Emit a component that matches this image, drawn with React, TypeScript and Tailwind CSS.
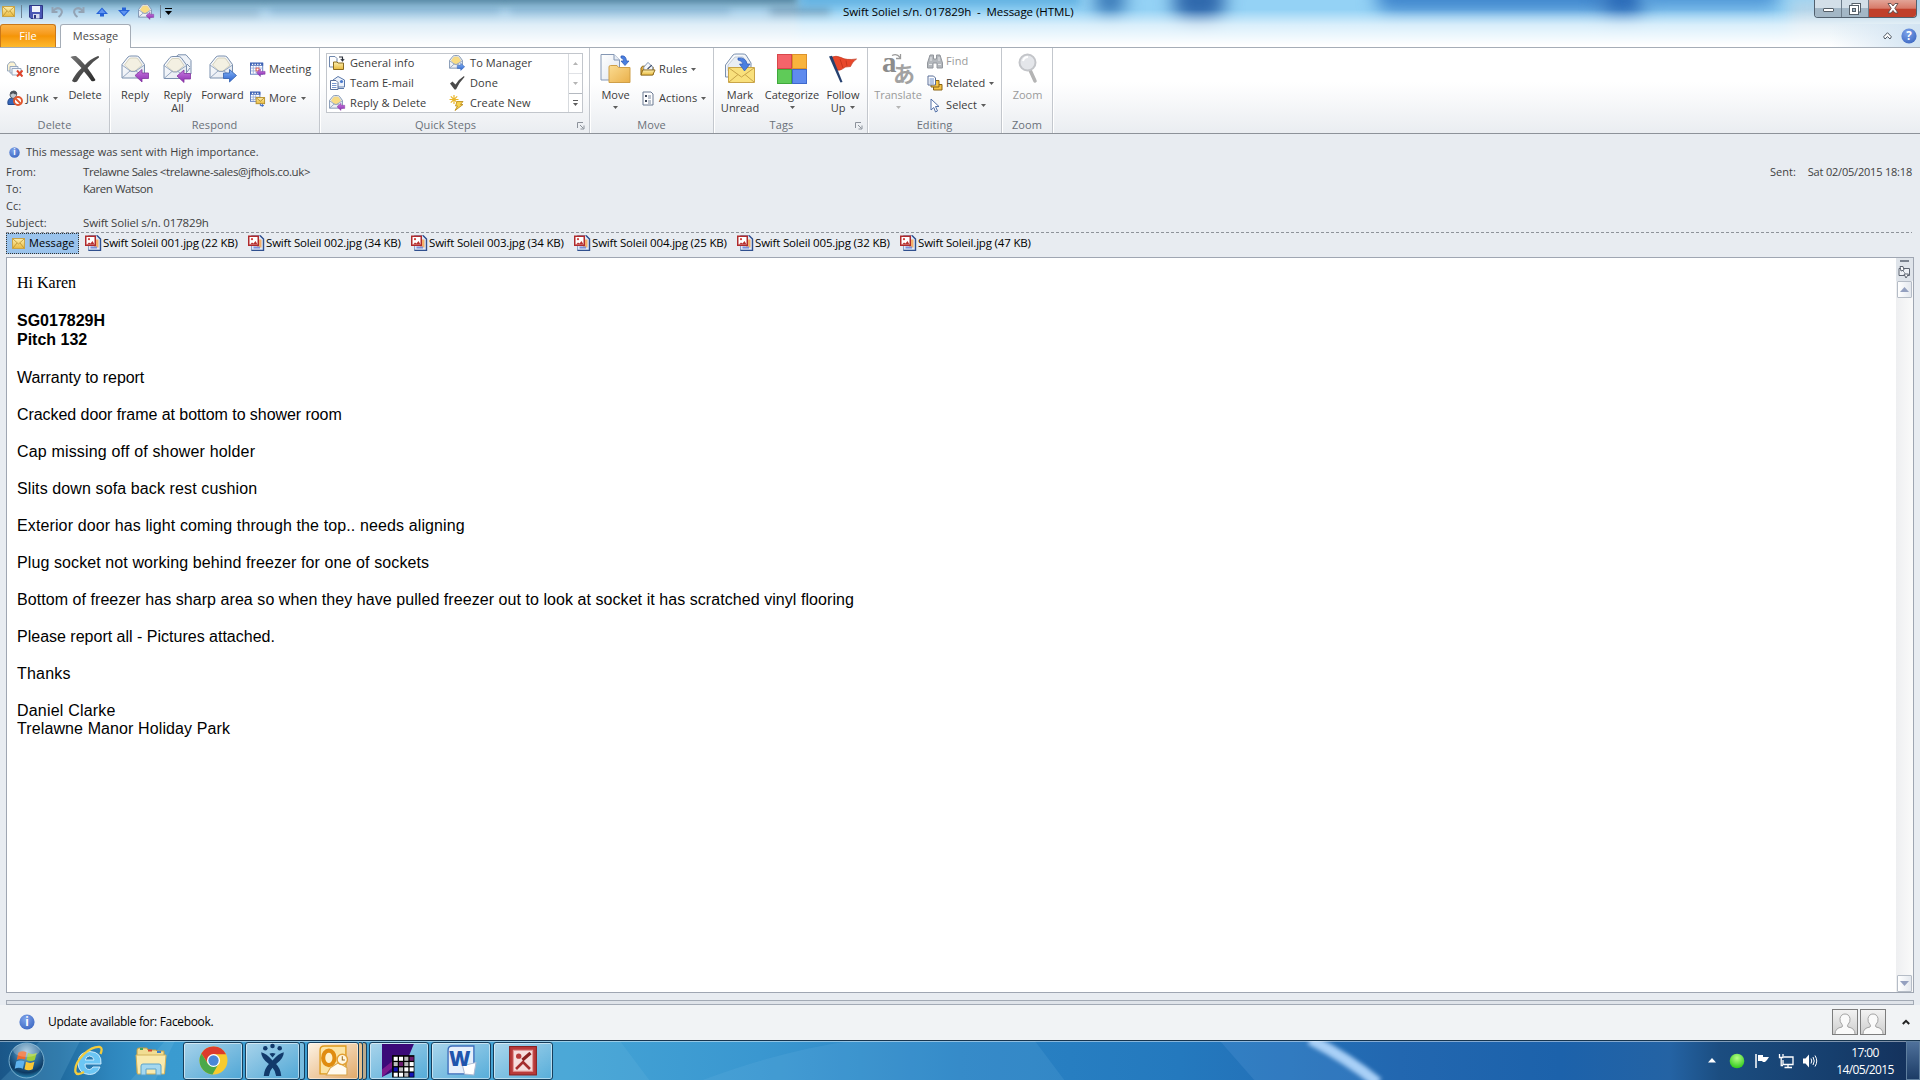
import React from 'react';

type IconProps = { className?: string };

/* ---------- shared icon gradients ---------- */

const Defs: React.FC = () => (
  <svg width="0" height="0" className="absolute" aria-hidden="true">
    <defs>
      <linearGradient id="gold" x1="0" y1="0" x2="0" y2="1">
        <stop offset="0" stopColor="#fdf0b0" />
        <stop offset="1" stopColor="#e9b93c" />
      </linearGradient>
      <linearGradient id="folder" x1="0" y1="0" x2="1" y2="1">
        <stop offset="0" stopColor="#fbdc92" />
        <stop offset="1" stopColor="#eab04a" />
      </linearGradient>
      <linearGradient id="paper" x1="0" y1="0" x2="1" y2="1">
        <stop offset="0" stopColor="#ffffff" />
        <stop offset="1" stopColor="#dfe5ee" />
      </linearGradient>
      <linearGradient id="purple" x1="0" y1="0" x2="0" y2="1">
        <stop offset="0" stopColor="#c77be0" />
        <stop offset="1" stopColor="#8d2bb0" />
      </linearGradient>
      <linearGradient id="blue" x1="0" y1="0" x2="0" y2="1">
        <stop offset="0" stopColor="#86b4f5" />
        <stop offset="1" stopColor="#2a62cf" />
      </linearGradient>
      <linearGradient id="dark" x1="0" y1="0" x2="1" y2="1">
        <stop offset="0" stopColor="#777" />
        <stop offset="1" stopColor="#222" />
      </linearGradient>
      <radialGradient id="orb" cx="0.5" cy="0.25" r="0.8">
        <stop offset="0" stopColor="#9cc4dc" />
        <stop offset="0.45" stopColor="#2c6c9c" />
        <stop offset="0.75" stopColor="#0d3a63" />
        <stop offset="1" stopColor="#2f9fd0" />
      </radialGradient>
      <radialGradient id="info" cx="0.4" cy="0.3" r="0.8">
        <stop offset="0" stopColor="#7ea3ea" />
        <stop offset="1" stopColor="#3a65c0" />
      </radialGradient>
      <radialGradient id="green" cx="0.5" cy="0.3" r="0.7">
        <stop offset="0" stopColor="#b6ff86" />
        <stop offset="1" stopColor="#2fc81c" />
      </radialGradient>
    </defs>
  </svg>
);

/* ---------- icons ---------- */

const YellowMail: React.FC = () => (
  <svg width="13" height="11" viewBox="0 0 13 11" className="block shrink-0">
    <rect x="0.5" y="0.5" width="12" height="10" fill="url(#gold)" stroke="#c9a448" />
    <path d="M1 1 L6.5 6 L12 1 M1 10 L5 5 M12 10 L8 5" fill="none" stroke="#b98f2c" strokeWidth="0.8" />
  </svg>
);

const SaveIcon: React.FC = () => (
  <svg width="14" height="14" viewBox="0 0 14 14" className="block">
    <path d="M0.5 0.5 H13.5 V13.5 H2 L0.5 12 Z" fill="#4a55b4" stroke="#2e3683" />
    <rect x="3" y="1" width="8" height="6" fill="#eef1fb" />
    <rect x="4" y="9" width="6.5" height="4.5" fill="#d5d9ef" />
    <rect x="5" y="10" width="2" height="3.5" fill="#2e3683" />
  </svg>
);

const UndoIcon: React.FC<IconProps> = ({ className }) => (
  <svg width="13" height="12" viewBox="0 0 13 12" className={className}>
    <path d="M1.5 1 V6 H6.5 M2 5.5 C4 2.5 7 1.5 9.5 3 C12 5 11 8.5 7.5 11" fill="none" stroke="#93a3b4" strokeWidth="2" />
  </svg>
);

const DiamondArrow: React.FC<IconProps> = ({ className }) => (
  <svg width="12" height="10" viewBox="0 0 12 10" className={className}>
    <path d="M6 0.500 L12 7 H8 V9.500 H4 V7 H0 Z" fill="#2763d8" />
    <path d="M6 2 L9.500 6 H2.500 Z" fill="#5f94f0" />
  </svg>
);

const OpenMail: React.FC<{ size?: number; arrow: 'purple' | 'blue'; warm?: boolean }> = ({ size = 28, arrow, warm }) => (
  <svg width={size} height={size} viewBox="0 0 28 28" className="block overflow-visible">
    <path d="M1 9.5 L7 2 Q8 1 10 1 H15 Q17 1 18 2 L23.500 9.5 V23 H1 Z" fill="url(#paper)" stroke="#7b90ae" strokeWidth={size < 20 ? 1.6 : 1} />
    <path d="M3.500 10 L8 4 Q9 3 10 3 H15 Q16 3 17 4 L21 10 L14 16 H10 Z" fill={warm ? '#f9dc83' : '#f3f0e2'} stroke="#c9c4ac" strokeWidth="0.7" />
    <path d="M1 10 L10 16.500 H14 L23.500 10 M1 23 L9.500 15.500 M23.500 23 L14.500 15.500" fill="none" stroke="#8c9fba" strokeWidth={size < 20 ? 1.5 : 0.9} />
    {arrow === 'purple' ? (
      <path d="M14 20.500 L21 14.500 V18 H27.500 V23.500 H21 V27 Z" fill="url(#purple)" stroke="#8336a0" strokeWidth="0.8" />
    ) : (
      <path d="M27.500 20.500 L20.500 14.500 V18 H14.500 V23.500 H20.500 V27 Z" fill="url(#blue)" stroke="#315fae" strokeWidth="0.8" />
    )}
  </svg>
);

const ReplyAllIcon: React.FC = () => (
  <svg width="30" height="30" viewBox="0 0 30 30" className="block overflow-visible">
    <path d="M12 4 L15 0.800 H23 L28 6.500 V20 H12 Z" fill="#eef2f8" stroke="#7b90ae" />
    <path d="M24 10 l3 3 m-3 5 l3 -4" stroke="#7b90ae" />
    <g transform="translate(0 1.500)">
      <path d="M1 9.500 L7 2 Q8 1 10 1 H15 Q17 1 18 2 L23.500 9.500 V23 H1 Z" fill="url(#paper)" stroke="#7b90ae" />
      <path d="M3.500 10 L8 4 Q9 3 10 3 H15 Q16 3 17 4 L21 10 L14 16 H10 Z" fill="#f3f0e2" stroke="#c9c4ac" strokeWidth="0.7" />
      <path d="M1 10 L10 16.500 H14 L23.500 10 M1 23 L9.500 15.500 M23.500 23 L14.500 15.500" fill="none" stroke="#8c9fba" strokeWidth="0.9" />
      <path d="M14 20.500 L21 14.500 V18 H27.500 V23.500 H21 V27 Z" fill="url(#purple)" stroke="#8336a0" strokeWidth="0.8" />
    </g>
  </svg>
);

const IgnoreIcon: React.FC = () => (
  <svg width="16" height="16" viewBox="0 0 16 16" className="block">
    <path d="M0.500 4 L3 1 H7 L9 4 V10 H0.500 Z" fill="#fbf3d3" stroke="#8da0ba" strokeWidth="0.9" />
    <path d="M3 5.500 H11 V12 H3 Z" fill="#eef3f9" stroke="#8da0ba" strokeWidth="0.9" />
    <path d="M5 7.500 H14 V14 H5 Z" fill="#f6f9fc" stroke="#8da0ba" strokeWidth="0.9" />
    <path d="M10 9.500 L15.500 15.500 M15.500 9.500 L10 15.500" stroke="#e0452c" strokeWidth="2" />
  </svg>
);

const JunkIcon: React.FC = () => (
  <svg width="16" height="16" viewBox="0 0 16 16" className="block">
    <path d="M1 14.500 Q0 8 5 8 Q10 8 9 14.500 Z" fill="#3767b8" stroke="#264a8c" />
    <path d="M3 5 Q3 1 6.500 1 Q10.500 1 9.500 5.500 Q8.500 8.500 6 8.500 Q3.500 8 3 5 Z" fill="#c3c9cf" stroke="#575d66" />
    <path d="M3 4 Q4 0.800 7 1 Q10 1 9.800 4 Q7 5 6 3 Q5 5 3 4 Z" fill="#4b5159" />
    <circle cx="11" cy="11" r="4" fill="#fff" stroke="#e0572e" strokeWidth="1.900" />
    <path d="M8.500 8.500 L13.500 13.500" stroke="#e0572e" strokeWidth="1.800" />
  </svg>
);

const DeleteIcon: React.FC = () => (
  <svg width="30" height="28" viewBox="0 0 30 28" className="block">
    <path
      d="M0.500 2 Q3 0.500 6 1 Q11 5 15 10 Q20 4 28 1 Q29.500 1 29 2.500 Q22 7 17.500 13 Q22 19 25.500 25 Q24 27 21.500 26 Q18 21 14 16.500 Q10 21 7 26.500 Q4 28 2 26 Q5 19 11.500 13 Q6 7 0.500 2 Z"
      fill="url(#dark)"
    />
  </svg>
);

const MeetingIcon: React.FC<{ more?: boolean }> = ({ more }) => (
  <svg width="17" height="17" viewBox="0 0 17 17" className="block">
    <rect x="0.500" y="1.500" width={more ? 10 : 13} height={more ? 10 : 12} fill="#fff" stroke="#5d7cc0" />
    <path d={more ? 'M0 3 H11' : 'M0 3 H14'} stroke="#3d62b4" strokeWidth="3" />
    <path d={more ? 'M2 3 H10' : 'M2 3 H13'} stroke="#fff" strokeWidth="1.200" strokeDasharray="1.400 1.400" />
    <path d={more ? 'M1 7 H10 M1 9.500 H8 M3.500 5 V11 M6 5 V9' : 'M1 7 H13 M1 10 H9 M3.500 5 V13 M6.500 5 V13 M9.500 5 V9'} stroke="#9fb1db" strokeWidth="1" />
    {more ? (
      <>
        <rect x="6.500" y="7.500" width="9" height="6.500" fill="url(#gold)" stroke="#b58f2c" />
        <path d="M7 8 L11 11.500 L15 8" fill="none" stroke="#b58f2c" />
        <path d="M11 14 V16 H14 M12.500 14.500 L14.500 16 L12.500 17" fill="none" stroke="#3664c4" />
      </>
    ) : (
      <>
        <rect x="6.500" y="7" width="3" height="3" fill="#fff" stroke="#e05c4e" />
        <path d="M7 12 L11 8 V10.500 H16 V13.500 H11 V16 Z" fill="url(#purple)" stroke="#8336a0" strokeWidth="0.6" />
      </>
    )}
  </svg>
);

const GeneralInfoIcon: React.FC = () => (
  <svg width="16" height="16" viewBox="0 0 16 16" className="block">
    <path d="M0.500 1.500 H6 L8 3.500 V12 H0.500 Z" fill="#fdfdfe" stroke="#6f87ad" />
    <path d="M10 2 H13.500 V5 M11.800 4 L13.500 6 L15.200 4" fill="none" stroke="#2a2f3a" strokeWidth="1.100" />
    <path d="M4.500 7 H8 L9 8 H14.500 V14.500 H4.500 Z" fill="url(#gold)" stroke="#8a6a1e" />
  </svg>
);

const TeamMailIcon: React.FC = () => (
  <svg width="16" height="16" viewBox="0 0 16 16" className="block">
    <path d="M4 5 L9 1.500 L15.500 5 V12 H4 Z" fill="#eef3fb" stroke="#5a78aa" />
    <circle cx="12.500" cy="6.500" r="1.600" fill="#4a79cc" />
    <path d="M1.500 5.500 H7 L9 7.500 V14.500 H1.500 Z" fill="#fff" stroke="#5a6f98" />
    <path d="M3 8.500 H7.500 M3 10.500 H7.500 M3 12.500 H7.500" stroke="#6b8cc8" strokeWidth="0.900" />
    <path d="M9 13.500 H15" stroke="#5a78aa" />
  </svg>
);

const DoneIcon: React.FC = () => (
  <svg width="16" height="16" viewBox="0 0 16 16" className="block">
    <path d="M1 8.500 L3.500 6.500 L6.500 9.500 Q10 4 15 1 L15.500 2 Q10.500 7 7 14.500 H5.500 Z" fill="#4a4a4a" />
  </svg>
);

const CreateNewIcon: React.FC = () => (
  <svg width="16" height="16" viewBox="0 0 16 16" className="block">
    <path d="M5 0 V9 M0.500 4.500 H9.500 M1.800 1.300 L8.200 7.700 M8.200 1.300 L1.800 7.700" stroke="#eab62a" strokeWidth="1.200" />
    <path d="M8 6.500 H14 L11.500 9.500 H14 L6 15.500 L8.500 11 H6.500 Z" fill="#f8d24e" stroke="#b88816" strokeWidth="0.800" />
  </svg>
);

const MoveIcon: React.FC = () => (
  <svg width="32" height="32" viewBox="0 0 32 32" className="block">
    <path d="M1 1.500 H14 L19.500 7 V27 H1 Z" fill="url(#paper)" stroke="#8497b4" />
    <path d="M14 1.500 V7 H19.500" fill="#e7edf5" stroke="#8497b4" />
    <path d="M21 3 Q26 2 26.500 8 H29 L25 12.500 L21 8 H23.500 Q23.500 5 21 5 Z" fill="#4a7fe0" stroke="#2b58b4" strokeWidth="0.700" />
    <path d="M9 14 Q9 12.500 10.500 12.500 H17 L18.500 14.500 H30 V29.500 H9 Z" fill="url(#folder)" stroke="#cf9f48" />
  </svg>
);

const RulesIcon: React.FC = () => (
  <svg width="17" height="16" viewBox="0 0 17 16" className="block">
    <path d="M1 7 L2.500 5 H6 L7 6 H14 V14 H1 Z" fill="#e6ae3c" stroke="#8a6516" />
    <path d="M4 6 L8.500 1 L13.500 6 V10 H4 Z" fill="#f4f7fc" stroke="#7b90ae" />
    <path d="M8 8 L12.500 4" stroke="#33415f" strokeWidth="1.100" />
    <path d="M3 9 H16 L13.500 14.500 H1 Z" fill="url(#gold)" stroke="#8a6516" />
  </svg>
);

const ActionsIcon: React.FC = () => (
  <svg width="13" height="15" viewBox="0 0 13 15" className="block">
    <path d="M1 1 H9 L11 3 V14 H1 Z" fill="#fdfdfe" stroke="#6b7a93" />
    <rect x="3" y="4" width="2" height="2" fill="#3c4658" />
    <rect x="3" y="9" width="2" height="2" fill="#3c4658" />
    <path d="M6 5 H9 M6 7 H9 M6 10 H9 M6 12 H9" stroke="#6b7a93" strokeWidth="0.900" />
  </svg>
);

const MarkUnreadIcon: React.FC = () => (
  <svg width="32" height="32" viewBox="0 0 32 32" className="block">
    <path d="M1.500 12 L9 2 Q10 1 12 1 H19 Q21 1 22 2 L27 10 V24 H1.500 Z" fill="url(#paper)" stroke="#7b90ae" />
    <path d="M4 12 L11 4 H19 L24 12 V18 H4 Z" fill="#e9eef4" stroke="#aebacb" strokeWidth="0.700" />
    <path d="M4.500 14.500 H30.500 V29.500 H4.500 Z" fill="#f9e07c" stroke="#c9a448" />
    <path d="M5 15 L17.500 24 L30 15 M5 29 L14 21.500 M30 29 L21 21.500" fill="none" stroke="#c9a448" />
    <path d="M14 5 Q22 4 23 11 H26 L20.500 18 L15.500 11 H19 Q18 7.500 14 7 Z" fill="#4a7fe0" stroke="#2b58b4" strokeWidth="0.700" />
  </svg>
);

const CategorizeIcon: React.FC = () => (
  <svg width="30" height="30" viewBox="0 0 30 30" className="block">
    <rect x="0.500" y="0.500" width="14" height="14" fill="#f4646a" stroke="#d8474a" />
    <rect x="15.500" y="0.500" width="14" height="14" fill="#f9b43d" stroke="#dd922a" />
    <rect x="0.500" y="15.500" width="14" height="14" fill="#5fcb58" stroke="#3fa83c" />
    <rect x="15.500" y="15.500" width="14" height="14" fill="#5f8bee" stroke="#3e69cc" />
  </svg>
);

const FlagIcon: React.FC = () => (
  <svg width="30" height="30" viewBox="0 0 30 30" className="block">
    <path d="M3 3.500 Q8 1 13 3.500 Q18 6.500 28.500 5 Q24 8 22.500 12.500 Q17 12 13.500 15.500 Q11 17 8 15.500 Z" fill="#e8472a" stroke="#c03218" strokeWidth="0.700" />
    <path d="M12 5 L15 14 M18 6.500 L19 12" stroke="#c03218" strokeWidth="0.800" />
    <path d="M1 2.500 L4 1.800 L14.500 28 L12.500 28.500 Z" fill="#25406f" />
  </svg>
);

const TranslateIcon: React.FC = () => (
  <svg width="32" height="32" viewBox="0 0 32 32" className="block overflow-visible">
    <text x="0" y="19" fontFamily="Liberation Serif, serif" fontWeight="bold" fontSize="29" fill="#8c8c8c">a</text>
    <text x="11" y="29" fontFamily="Noto Sans CJK JP, sans-serif" fontWeight="bold" fontSize="22" fill="#a2a2a2">あ</text>
    <path d="M10 2.500 Q15 0 18 4.500 M18.500 1 V5.500 H14" fill="none" stroke="#9a9a9a" strokeWidth="1.300" />
  </svg>
);

const FindIcon: React.FC = () => (
  <svg width="16" height="15" viewBox="0 0 16 15" className="block">
    <path d="M3 1 H6.500 V5 H9.500 V1 H13 L15.500 9 V14 H10 V9 H6 V14 H0.500 V9 Z" fill="#b4b8bd" stroke="#92969c" />
    <path d="M2 10.500 H5 M11 10.500 H14 M4 3 V7 M12 3 V7" stroke="#e6e8ea" />
  </svg>
);

const RelatedIcon: React.FC = () => (
  <svg width="16" height="16" viewBox="0 0 16 16" className="block">
    <path d="M6.500 8.500 H10 L11 9.500 H15 V15 H6.500 Z" fill="#f5c343" stroke="#8a6516" />
    <path d="M4 5.500 H12 V12 H4 Z" fill="#f5c343" stroke="#8a6516" />
    <path d="M1 1 H6.500 L8.500 3 V10 H1 Z" fill="#fff" stroke="#5a6f98" />
    <path d="M2.500 4 H7 M2.500 6 H7 M2.500 8 H7" stroke="#6b8cc8" />
  </svg>
);

const SelectIcon: React.FC = () => (
  <svg width="10" height="15" viewBox="0 0 10 15" className="block">
    <path d="M1 1 L9 8.500 H5.500 L7.500 13 L5.500 14 L3.800 9.500 L1 12 Z" fill="#fff" stroke="#5270a8" />
  </svg>
);

const ZoomIcon: React.FC = () => (
  <svg width="20" height="31" viewBox="0 0 20 31" className="block">
    <path d="M12 17 L17 28" stroke="#b4b4b4" strokeWidth="3.500" strokeLinecap="round" />
    <circle cx="9.500" cy="9.500" r="8" fill="#e4e6ea" stroke="#c3c5c9" strokeWidth="2" />
    <path d="M5 8 Q6 4 10 4" fill="none" stroke="#fff" strokeWidth="2" />
  </svg>
);

const JpgIcon: React.FC = () => (
  <svg width="17" height="16" viewBox="0 0 17 16" className="block shrink-0">
    <path d="M3.500 0.500 H12 L15.500 4 V15.500 H3.500 Z" fill="#dfe9f8" stroke="#8da2c8" />
    <path d="M12 0.500 L15.500 4 V15.500 H3.500" fill="none" stroke="#2f4f8e" strokeWidth="1.400" />
    <rect x="9" y="4.500" width="4.500" height="8" fill="#f3b06a" />
    <path d="M5.500 12.500 H12" stroke="#7d90d8" strokeWidth="2" />
    <rect x="0.750" y="1.250" width="9.500" height="9" fill="#fff" stroke="#b02a2c" strokeWidth="1.500" />
    <circle cx="4" cy="4.200" r="1.100" fill="#d0403c" />
    <path d="M2 9.500 L4 7.500 L5.500 8.500 L7.500 6 L9.500 9.500 Z" fill="#b8302e" />
  </svg>
);

const InfoIcon: React.FC<{ size: number; glyph?: string }> = ({ size, glyph = 'i' }) => (
  <svg width={size} height={size} viewBox="0 0 16 16" className="block overflow-visible">
    <circle cx="8" cy="8" r="7.600" fill="url(#info)" />
    <text x="8" y="12" textAnchor="middle" fontFamily="Open Sans, sans-serif" fontWeight="bold" fontSize="11.500" fill="#fff">{glyph}</text>
  </svg>
);

const Caret: React.FC<{ faded?: boolean }> = ({ faded }) => (
  <svg width="5" height="3" viewBox="0 0 5 3" className="block shrink-0">
    <path d="M0 0 H5 L2.500 3 Z" fill={faded ? '#b5b5b5' : '#5c5c5c'} />
  </svg>
);

const Launcher: React.FC = () => (
  <svg width="8" height="8" viewBox="0 0 8 8" className="block">
    <path d="M0.500 6 V0.500 H6" fill="none" stroke="#8c929b" />
    <path d="M3 3 L6.500 6.500 M7 3.500 V7 H3.500" fill="none" stroke="#8c929b" />
  </svg>
);

/* ---------- ribbon pieces ---------- */

interface GroupProps {
  label: string;
  width: string;
  launcher?: boolean;
  children: React.ReactNode;
}

const Group: React.FC<GroupProps> = ({ label, width, launcher, children }) => (
  <div className={`relative flex h-full flex-col border-r border-[#c3c7cd] shadow-[1px_0_0_#fff] ${width}`}>
    <div className="flex h-[69px]">{children}</div>
    <div className={`text-center leading-[16px] text-[#6a7079] tracking-[0.1px] ${launcher ? 'pr-[18px]' : ''}`}>{label}</div>
    {launcher && <div className="absolute right-[4px] bottom-[3px]"><Launcher /></div>}
  </div>
);

interface BigButtonProps {
  icon: React.ReactNode;
  width: string;
  lines: string[];
  caret?: 'below' | 'inline';
  faded?: boolean;
}

const BigButton: React.FC<BigButtonProps> = ({ icon, width, lines, caret, faded }) => (
  <div className={`flex shrink-0 flex-col items-center ${width} ${faded ? 'text-[#9a9a9a]' : ''}`}>
    <div className="flex h-[40px] items-center justify-center pt-px">{icon}</div>
    {lines.map((line, i) => (
      <div key={line} className="flex items-center gap-[5px] leading-[13px] whitespace-nowrap">
        {line}
        {caret === 'inline' && i === lines.length - 1 && <Caret />}
      </div>
    ))}
    {caret === 'below' && <div className="pt-[5px]"><Caret faded={faded} /></div>}
  </div>
);

interface SmallButtonProps {
  icon: React.ReactNode;
  label: string;
  caret?: boolean;
  faded?: boolean;
}

const SmallButton: React.FC<SmallButtonProps> = ({ icon, label, caret, faded }) => (
  <div className={`flex h-[20px] items-center whitespace-nowrap ${faded ? 'text-[#9a9a9a]' : ''}`}>
    <div className="mr-[3px] flex w-[16px] shrink-0 justify-center">{icon}</div>
    <span className="tracking-[0.1px]">{label}</span>
    {caret && <span className="ml-[4px]"><Caret /></span>}
  </div>
);

const quickSteps = [
  { label: 'General info', icon: <GeneralInfoIcon /> },
  { label: 'To Manager', icon: <OpenMail size={16} arrow="blue" warm /> },
  { label: 'Team E-mail', icon: <TeamMailIcon /> },
  { label: 'Done', icon: <DoneIcon /> },
  { label: 'Reply & Delete', icon: <OpenMail size={16} arrow="purple" warm /> },
  { label: 'Create New', icon: <CreateNewIcon /> },
];

const Ribbon: React.FC = () => (
  <div className="flex h-[86px] border-b border-[#8d9299] bg-linear-to-b from-white from-40% to-[#eaedf1] text-[#3b3b3b]">
    <Group label="Delete" width="w-[110px]">
      <div className="flex w-[62px] flex-col gap-[9px] pt-[11px] pl-[7px]">
        <SmallButton icon={<IgnoreIcon />} label="Ignore" />
        <SmallButton icon={<JunkIcon />} label="Junk" caret />
      </div>
      <BigButton icon={<DeleteIcon />} width="w-[46px]" lines={['Delete']} />
    </Group>
    <Group label="Respond" width="w-[210px]">
      <BigButton icon={<OpenMail arrow="purple" />} width="ml-[3px] w-[44px]" lines={['Reply']} />
      <BigButton icon={<ReplyAllIcon />} width="w-[41px]" lines={['Reply', 'All']} />
      <BigButton icon={<OpenMail arrow="blue" />} width="w-[49px]" lines={['Forward']} />
      <div className="flex flex-col gap-[9px] pt-[11px] pl-[3px]">
        <SmallButton icon={<MeetingIcon />} label="Meeting" />
        <SmallButton icon={<MeetingIcon more />} label="More" caret />
      </div>
    </Group>
    <Group label="Quick Steps" width="w-[270px]" launcher>
      <div className="mt-[5px] ml-[6px] flex h-[60px] w-[257px] border border-[#c2c6cc] bg-white">
        <div className="-mt-px grid w-[241px] grid-cols-[120px_120px] content-start pl-[2px]">
          {quickSteps.map((step) => (
            <div key={step.label} className="flex h-[20px] items-center tracking-[0.1px] whitespace-nowrap">
              <div className="mr-[5px] w-[16px]">{step.icon}</div>
              {step.label}
            </div>
          ))}
        </div>
        <div className="flex w-[14px] flex-col items-center border-l border-[#d7dade]">
          <div className="flex h-[20px] w-full items-center justify-center border-b border-[#e0e2e6]">
            <div className="rotate-180"><Caret faded /></div>
          </div>
          <div className="flex h-[19px] w-full items-center justify-center">
            <Caret faded />
          </div>
          <div className="flex w-full flex-1 flex-col items-center justify-center gap-[2px] border-t border-[#b4b9c0]">
            <div className="h-px w-[5px] bg-[#5c5c5c]" />
            <Caret />
          </div>
        </div>
      </div>
    </Group>
    <Group label="Move" width="w-[124px]">
      <BigButton icon={<MoveIcon />} width="ml-[4px] w-[43px]" lines={['Move']} caret="below" />
      <div className="flex flex-col gap-[9px] pt-[11px] pl-[3px]">
        <SmallButton icon={<RulesIcon />} label="Rules" caret />
        <SmallButton icon={<ActionsIcon />} label="Actions" caret />
      </div>
    </Group>
    <Group label="Tags" width="w-[154px]" launcher>
      <BigButton icon={<MarkUnreadIcon />} width="ml-[2px] w-[48px]" lines={['Mark', 'Unread']} />
      <BigButton icon={<CategorizeIcon />} width="w-[56px]" lines={['Categorize']} caret="below" />
      <BigButton icon={<FlagIcon />} width="w-[46px]" lines={['Follow', 'Up']} caret="inline" />
    </Group>
    <Group label="Editing" width="w-[134px]">
      <BigButton icon={<TranslateIcon />} width="ml-[4px] w-[52px]" lines={['Translate']} caret="below" faded />
      <div className="flex flex-col gap-[2px] pt-[3px] pl-[3px]">
        <SmallButton icon={<FindIcon />} label="Find" faded />
        <SmallButton icon={<RelatedIcon />} label="Related" caret />
        <SmallButton icon={<SelectIcon />} label="Select" caret />
      </div>
    </Group>
    <Group label="Zoom" width="w-[51px]">
      <BigButton icon={<ZoomIcon />} width="w-[51px]" lines={['Zoom']} faded />
    </Group>
  </div>
);

/* ---------- title bar ---------- */

const Glass: React.FC = () => (
  <div className="absolute inset-0 overflow-hidden bg-[#94d2f5]">
    <div className="absolute top-0 left-[-10px] h-full w-[808px] bg-[#a5cfea] blur-[3px]" />
    <div className="absolute top-[-8px] left-[-10px] h-[12px] w-[808px] bg-[#4f7f99] blur-[4px]" />
    <div className="absolute top-[11px] left-[165px] h-[6px] w-[95px] bg-[#5f87a3]/60 blur-[4px]" />
    <div className="absolute top-[8px] left-[270px] h-[7px] w-[230px] bg-[#6fa0c2]/60 blur-[4px]" />
    <div className="absolute top-[8px] left-[510px] h-[7px] w-[220px] bg-[#6fa0c2]/60 blur-[4px]" />
    <div className="absolute top-[8px] left-[770px] h-[8px] w-[60px] bg-[#5f87a3]/70 blur-[4px]" />
    <div className="absolute top-[-8px] left-[800px] h-[14px] w-[280px] bg-[#4ba3d8]/70 blur-[5px]" />
    <div className="absolute top-[-16px] left-[1094px] h-[32px] w-[32px] rounded-full bg-[#3474b4] blur-[9px]" />
    <div className="absolute top-[-20px] left-[1172px] h-[42px] w-[54px] rounded-full bg-[#2f68ac] blur-[9px]" />
    <div className="absolute top-[-20px] left-[1375px] h-[32px] w-[235px] rounded-full bg-[#3d84cc] blur-[9px]" />
    <div className="absolute top-[-20px] left-[1598px] h-[38px] w-[50px] rounded-full bg-[#2b6bb8] blur-[9px]" />
    <div className="absolute top-[-20px] left-[1640px] h-[28px] w-[140px] rounded-full bg-[#4a92d4] blur-[9px]" />
    <div className="absolute top-0 left-[1790px] h-full w-[150px] bg-[#b7d5e8] blur-[8px]" />
    <div className="absolute inset-0 bg-linear-to-b from-white/0 from-20% via-white/65 via-52% to-white to-95%" />
    <div className="absolute right-0 bottom-0 h-[24px] w-[90px] bg-linear-to-r from-transparent to-[#d3e4f2]" />
  </div>
);

const TitleBar: React.FC = () => (
  <div className="relative h-[48px]">
    <Glass />
    <div className="relative flex h-[24px] text-black">
      <div className="flex w-[843px] items-center pb-px pl-[2px]">
        <YellowMail />
        <div className="ml-[6px] h-[13px] w-px bg-[#6d8294]" />
        <div className="ml-[7px]"><SaveIcon /></div>
        <UndoIcon className="ml-[8px]" />
        <UndoIcon className="ml-[8px] -scale-x-100" />
        <DiamondArrow className="ml-[11px]" />
        <DiamondArrow className="ml-[10px] rotate-180" />
        <div className="ml-[8px]"><OpenMail size={16} arrow="purple" warm /></div>
        <div className="ml-[6px] h-[13px] w-px bg-[#6d8294]" />
        <div className="ml-[4px] flex flex-col items-center gap-[2px]">
          <div className="h-px w-[7px] bg-black" />
          <svg width="7" height="4" viewBox="0 0 7 4"><path d="M0 0 H7 L3.500 4 Z" fill="#000" /></svg>
        </div>
      </div>
      <div className="text-[11.5px] leading-[23px] tracking-[-0.06px] whitespace-pre">Swift Soliel s/n. 017829h  -  Message (HTML)</div>
      <div className="mr-[3px] ml-auto flex h-[18px] overflow-hidden rounded-b-[4px] border border-t-0 border-[#51606e]">
        <div className="flex w-[27px] items-center justify-center border-r border-[#6d7d8b] bg-linear-to-b from-[#d3dfe8] from-50% to-[#a3b7c6] to-50%">
          <div className="mt-[3px] h-[4px] w-[11px] rounded-[1px] border border-[#555f68] bg-white" />
        </div>
        <div className="flex w-[27px] items-center justify-center border-r border-[#6d7d8b] bg-linear-to-b from-[#d3dfe8] from-50% to-[#a3b7c6] to-50%">
          <svg width="12" height="12" viewBox="0 0 12 12">
            <rect x="3" y="0.500" width="8.500" height="8.500" fill="#fff" stroke="#555f68" />
            <rect x="0.500" y="2.500" width="9" height="9" fill="#fff" stroke="#555f68" />
            <rect x="3.500" y="5.500" width="3" height="3" fill="#a3b7c6" stroke="#555f68" />
          </svg>
        </div>
        <div className="flex w-[47px] items-center justify-center bg-linear-to-b from-[#e2a497] from-0% via-[#d77a69] via-48% to-[#c03f2a] to-55%">
          <svg width="12" height="11" viewBox="0 0 12 11">
            <path d="M1 0.500 H4 L6 3 L8 0.500 H11 L7.800 5.300 L11 10 H8 L6 7.500 L4 10 H1 L4.200 5.300 Z" fill="#fff" stroke="#5c4a4a" strokeWidth="0.900" />
          </svg>
        </div>
      </div>
    </div>
    <div className="relative flex h-[24px] items-end border-b border-[#a5adb7]">
      <div className="flex h-[23px] w-[56px] items-center justify-center rounded-t-[3px] border border-b-0 border-[#c9781a] bg-linear-to-b from-[#fbb345] via-[#f59505] to-[#fdb92c] text-white">
        File
      </div>
      <div className="-mb-px ml-[4px] flex h-[24px] w-[71px] items-center justify-center rounded-t-[3px] border border-b-0 border-[#a5adb7] bg-white tracking-[0.100px] text-[#4a4a4a]">
        Message
      </div>
      <div className="mr-[3px] ml-auto flex h-full items-center gap-[9px]">
        <svg width="9" height="8" viewBox="0 0 9 8">
          <path d="M4.500 0.700 L8.400 4.800 L7 7 L4.500 4.600 L2 7 L0.600 4.800 Z" fill="#fff" stroke="#4b5560" />
        </svg>
        <InfoIcon size={16} glyph="?" />
      </div>
    </div>
  </div>
);

/* ---------- message header ---------- */

const headers = [
  { name: 'From:', value: 'Trelawne Sales <trelawne-sales@jfhols.co.uk>', spacing: 'tracking-[-0.39px]' },
  { name: 'To:', value: 'Karen Watson', spacing: 'tracking-[-0.45px]' },
  { name: 'Cc:', value: '', spacing: 'tracking-normal' },
  { name: 'Subject:', value: 'Swift Soliel s/n. 017829h', spacing: 'tracking-[-0.16px]' },
];

const attachments = [
  'Swift Soleil 001.jpg (22 KB)',
  'Swift Soleil 002.jpg (34 KB)',
  'Swift Soleil 003.jpg (34 KB)',
  'Swift Soleil 004.jpg (25 KB)',
  'Swift Soleil 005.jpg (32 KB)',
  'Swift Soleil.jpg (47 KB)',
];

const MessageHeader: React.FC = () => (
  <div className="h-[123px] pt-[8px] pl-[6px] text-[#3f3f3f]">
    <div className="flex h-[20px] items-center pl-[3px]">
      <div className="mr-[6px]"><InfoIcon size={11} /></div>
      This message was sent with High importance.
    </div>
    <div className="flex h-[70px] justify-between pt-px pr-[8px]">
      <div>
        {headers.map((h) => (
          <div key={h.name} className="flex h-[17px] leading-[17px]">
            <span className="w-[77px]">{h.name}</span>
            <span className={`text-[11.5px] ${h.spacing}`}>{h.value}</span>
          </div>
        ))}
      </div>
      <div className="flex gap-[12px] leading-[17px]">
        <span>Sent:</span>
        <span className="tracking-[-0.200px]">Sat 02/05/2015 18:18</span>
      </div>
    </div>
    <div className="mr-[8px] h-px bg-[repeating-linear-gradient(90deg,#8e939a_0_3px,transparent_3px_5px)]" />
    <div className="flex h-[21px] text-black">
      <div className="flex w-[73px] shrink-0 items-center gap-[4px] border border-dotted border-[#333] bg-[#9ac3ec] pl-[5px]">
        <YellowMail />
        <span className="tracking-[0.1px]">Message</span>
      </div>
      {attachments.map((name) => (
        <div key={name} className="flex h-[20px] w-[163px] shrink-0 items-center gap-px pl-[6px] whitespace-nowrap">
          <JpgIcon />
          <span className="text-[11.5px] tracking-[-0.18px]">{name}</span>
        </div>
      ))}
    </div>
  </div>
);

/* ---------- message body ---------- */

const paragraphs = [
  { text: 'Warranty to report', spacing: 'tracking-[-0.06px]' },
  { text: 'Cracked door frame at bottom to shower room', spacing: 'tracking-[-0.06px]' },
  { text: 'Cap missing off of shower holder', spacing: 'tracking-[0.17px]' },
  { text: 'Slits down sofa back rest cushion', spacing: 'tracking-[0.11px]' },
  { text: 'Exterior door has light coming through the top.. needs aligning', spacing: 'tracking-[0.12px]' },
  { text: 'Plug socket not working behind freezer for one of sockets', spacing: 'tracking-[0.1px]' },
  {
    text: 'Bottom of freezer has sharp area so when they have pulled freezer out to look at socket it has scratched vinyl flooring',
    spacing: 'tracking-[0.06px]',
  },
  { text: 'Please report all - Pictures attached.', spacing: 'tracking-normal' },
  { text: 'Thanks', spacing: 'tracking-[0.2px]' },
];

const ScrollButton: React.FC<{ down?: boolean }> = ({ down }) => (
  <div className="flex h-[17px] w-[15px] items-center justify-center rounded-[1px] border border-[#b5bcc6] bg-linear-to-r from-white to-[#e4e8ee]">
    <svg width="9" height="5" viewBox="0 0 9 5" className={down ? 'rotate-180' : ''}>
      <path d="M4.500 0 L9 5 H0 Z" fill="#94a0bf" />
    </svg>
  </div>
);

const MessageBody: React.FC = () => (
  <div className="mr-[6px] ml-[6px] flex h-[736px] border border-[#9fa6b2] bg-white">
    <div className="flex-1 pt-[16px] pl-[10px] text-[16px] leading-[18.500px] text-black">
      <p className="mb-[18px] font-['Liberation_Serif',serif]">Hi Karen</p>
      <div className="mb-[20px] font-['Liberation_Sans',sans-serif] font-bold leading-[19px]">
        <p>SG017829H</p>
        <p>Pitch 132</p>
      </div>
      <div className="font-['Liberation_Sans',sans-serif]">
        {paragraphs.map((p) => (
          <p key={p.text} className={`mb-[18.5px] ${p.spacing}`}>{p.text}</p>
        ))}
        <p className="tracking-[0.2px]">Daniel Clarke</p>
        <p className="tracking-[0.11px]">Trelawne Manor Holiday Park</p>
      </div>
    </div>
    <div className="flex w-[17px] flex-col items-center bg-linear-to-r from-[#eeeff1] to-[#fafafa]">
      <div className="flex h-[23px] w-full flex-col items-center bg-[#dfe4ea] pt-[2px]">
        <div className="h-[2px] w-[9px] bg-[#7a828e]" />
        <svg width="13" height="13" viewBox="0 0 13 13" className="mt-[4px] shrink-0">
          <path d="M1 2.500 H11.500 V9.500 H1 Z" fill="#eef1f5" stroke="#5d6470" />
          <path d="M2 0.500 L5 0.500 L6 4 L3 5 Z M6 8 L8 12 L10.500 8 Z" fill="#fff" stroke="#5d6470" />
          <path d="M5 5 L8 8" stroke="#5d6470" strokeDasharray="1 1" />
        </svg>
      </div>
      <ScrollButton />
      <div className="mt-auto"><ScrollButton down /></div>
    </div>
  </div>
);

/* ---------- people pane ---------- */

const Avatar: React.FC = () => (
  <div className="h-[26px] w-[26px] border border-[#7d7d7d] bg-linear-to-b from-[#f2f2f2] to-[#cfcfcf]">
    <svg width="24" height="24" viewBox="0 0 24 24">
      <path d="M2 24 Q2 18 9 17 Q10 16 9 14.500 Q6.500 12 7 8.500 Q8 4 12 4 Q16 4 17 8.500 Q17.500 12 15 14.500 Q14 16 15 17 Q22 18 22 24" fill="#fafafa" stroke="#a3a3a3" />
    </svg>
  </div>
);

const PeoplePane: React.FC = () => (
  <>
    <div className="h-[7px]" />
    <div className="mr-[6px] ml-[6px] h-[5px] border border-[#a3aab5] bg-[#dfe3e9]" />
    <div className="flex h-[35px] items-center bg-[#f1f3f5] pb-px text-black">
      <div className="ml-[19px]"><InfoIcon size={16} /></div>
      <span className="ml-[13px] text-[12px] tracking-[-0.33px]">Update available for: Facebook.</span>
      <div className="mr-[10px] ml-auto flex items-center gap-[2px]">
        <Avatar />
        <Avatar />
        <svg width="8" height="6" viewBox="0 0 8 6" className="ml-[14px]">
          <path d="M0.800 5 L4 1.800 L7.200 5" fill="none" stroke="#222" strokeWidth="2" />
        </svg>
      </div>
    </div>
  </>
);

/* ---------- taskbar ---------- */

const StartOrb: React.FC = () => (
  <svg width="37" height="37" viewBox="0 0 36 36">
    <circle cx="18" cy="18" r="17" fill="url(#orb)" stroke="#7fb4d2" strokeWidth="0.900" />
    <path d="M10 10.500 Q14 8 18 10 L16.500 17 Q12.500 15.500 8.500 17.500 Z" fill="#ef6a2c" />
    <path d="M19.500 10.500 Q23.500 13 28 10.500 L26 17.500 Q22 19.500 18 17.500 Z" fill="#9fce3c" />
    <path d="M8 19 Q12 17 16 18.800 L14.500 26 Q10.500 24 6.500 26 Z" fill="#5fb2ee" />
    <path d="M17.500 19.300 Q21.500 21.500 25.700 19.300 L24 26.500 Q20 28.500 16 26.500 Z" fill="#fbc736" />
    <ellipse cx="18" cy="8" rx="13" ry="6.500" fill="#fff" opacity="0.220" />
  </svg>
);

const IeIcon: React.FC = () => (
  <svg width="32" height="32" viewBox="0 0 32 32">
    <path d="M27 22 H20 Q18.500 24.500 16.500 24.500 Q12 24.500 12 19 H28 Q29 7 17 6.500 Q5 7 5 18 Q5.500 29 16.500 29.500 Q24 29.500 27 22 Z M12.200 15 Q13 11 16.500 11 Q20.500 11 21 15 Z" fill="#6cc6f4" stroke="#d8f1ff" strokeWidth="0.900" fillRule="evenodd" />
    <path d="M27.500 9 Q30 3 27 2 Q20 1 11 9 Q1 19 2.500 27 Q4 31 11 27" fill="none" stroke="#f4cc3c" strokeWidth="2.300" />
  </svg>
);

const ExplorerIcon: React.FC = () => (
  <svg width="32" height="30" viewBox="0 0 32 30">
    <path d="M2 4 Q2 2 4 2 H12 L13 4 H21 L22 5 H29 V27 H2 Z" fill="#f1dd92" stroke="#bd9c45" />
    <path d="M5 3 H8" stroke="#3fa35c" strokeWidth="2" />
    <path d="M13 4.500 H17" stroke="#d2452f" strokeWidth="2" />
    <path d="M22 6 H26" stroke="#3a7fcc" strokeWidth="2" />
    <path d="M1 9 H31 L29.500 28 H2.500 Z" fill="#f9eaae" stroke="#d1b25b" />
    <path d="M6 29 V20 Q6 18 8 18 H24 Q26 18 26 20 V29 H21 V23 H11 V29 Z" fill="#a5d8ef" stroke="#5ba3cc" />
  </svg>
);

const ChromeIcon: React.FC = () => (
  <svg width="29" height="29" viewBox="0 0 28 28">
    <circle cx="14" cy="14" r="13.500" fill="#f7cb2f" />
    <path d="M2.300 7.250 A13.500 13.500 0 0 1 26 8 H14 L8 16 Z" fill="#dd3b2c" />
    <path d="M2.300 7.250 A13.500 13.500 0 0 0 13 27.500 L19 17 L14 14 L8.500 17 Z" fill="#4aa84a" />
    <circle cx="14" cy="14" r="6.300" fill="#fff" />
    <circle cx="14" cy="14" r="5" fill="#4a86d8" />
  </svg>
);

const JiraIcon: React.FC = () => (
  <svg width="25" height="35" viewBox="0 0 24 34">
    <circle cx="5" cy="5" r="2.200" fill="#123a6b" />
    <circle cx="12" cy="3" r="2.200" fill="#123a6b" />
    <circle cx="19" cy="5" r="2.200" fill="#123a6b" />
    <path d="M1 9 Q6 10 12 17 Q18 10 23 9 Q23 15 15.500 20.500 Q20 25 20.500 32 H15.500 Q15 27 12 24 Q9 27 8.500 32 H3.500 Q4 25 8.500 20.500 Q1 15 1 9 Z" fill="#123a6b" />
    <path d="M9 10.500 Q12 9 15 10.500 L12 14 Z" fill="#123a6b" />
  </svg>
);

const OutlookIcon: React.FC = () => (
  <svg width="31" height="31" viewBox="0 0 30 30">
    <path d="M2 5 Q2 1 6 1 H27 V28 H2 Z" fill="#fbe3a4" stroke="#dd9a1b" strokeWidth="1.300" />
    <path d="M12 22 L20 17 L28 22 V29 H8 Z" fill="#fffaf0" stroke="#d9a64c" />
    <ellipse cx="10.500" cy="12.500" rx="5.500" ry="7" fill="#fdf0cc" stroke="#e08c10" strokeWidth="4" />
    <circle cx="23.500" cy="14" r="5" fill="#fff6e0" stroke="#e2a036" strokeWidth="1.400" />
    <path d="M23.500 11 V14.500 H26" fill="none" stroke="#9b6a1c" />
  </svg>
);

const gridCells = [
  '#fff', '#fff', '#bdbdbd', '#6b1a6e',
  '#bdbdbd', '#6b1a6e', '#bdbdbd', '#fff',
  '#1414b8', '#bdbdbd', '#fff', '#fff',
  '#fff', '#fff', '#bdbdbd', '#1414b8',
];

const GridAppIcon: React.FC = () => (
  <svg width="34" height="34" viewBox="0 0 32 32">
    <path d="M0 0 H30 L25 12 L10 16 V26 L0 31 Z" fill="#3b0a78" />
    <path d="M0 31 L10 22 V16 L0 24 Z" fill="#7a1a8c" />
    <rect x="9.500" y="10.500" width="21" height="21" fill="#000" />
    {gridCells.map((fill, i) => (
      <rect key={i} x={11 + (i % 4) * 5} y={12 + Math.floor(i / 4) * 5} width="3.800" height="3.800" fill={fill} />
    ))}
  </svg>
);

const WordIcon: React.FC = () => (
  <svg width="31" height="31" viewBox="0 0 30 30" className="overflow-visible">
    <path d="M2 5 Q2 1 6 1 H27 V28 H2 Z" fill="#e6effb" stroke="#3c6cba" strokeWidth="1.300" />
    <path d="M16 20 L29 17 L27 29 L18 28 Z" fill="#fff" stroke="#aebcd4" />
    <text x="3" y="20" fontFamily="Open Sans, sans-serif" fontWeight="800" fontSize="20" fill="#1f55ad">W</text>
  </svg>
);

const PictureManagerIcon: React.FC = () => (
  <svg width="28" height="30" viewBox="0 0 26 28">
    <rect x="0.500" y="0.500" width="25" height="26.500" fill="#b83a3a" stroke="#8a2020" />
    <rect x="4" y="4" width="18" height="19.500" fill="#f6dede" stroke="#e59b9b" />
    <circle cx="9" cy="9.500" r="2.500" fill="#b83a3a" />
    <path d="M6.500 21.500 L13 15 L19.500 21.500" fill="none" stroke="#a62e2e" strokeWidth="2.500" />
    <path d="M12.500 13 L20 6.500" stroke="#8a2020" strokeWidth="3" />
  </svg>
);

interface TaskProps {
  className: string;
  children: React.ReactNode;
}

const TaskButton: React.FC<TaskProps> = ({ className, children }) => (
  <div className={`flex h-[38px] shrink-0 items-center justify-center rounded-[3px] border border-[#163e5c] shadow-[inset_0_0_0_1px_rgba(255,255,255,0.5)] ${className}`}>
    {children}
  </div>
);

const Taskbar: React.FC = () => (
  <div className="relative h-[40px] overflow-hidden border-t border-[#17354f] bg-[linear-gradient(90deg,#1a5688_0px,#206b9f_60px,#2e86bd_110px,#3a9bd0_170px,#45a5d6_540px,#3a97d0_760px,#2a83c4_960px,#2479be_1180px,#2267b0_1400px,#1c62ab_1560px,#2463a4_1670px,#1b4d80_1720px,#163f6e_1830px,#14305a_1920px)]">
    <svg width="1920" height="40" viewBox="0 0 1920 40" className="absolute inset-0">
      <path d="M0 40 L40 0 H80 L60 40 Z M130 40 L165 0 H175 L155 40 Z" fill="#7cc4e6" opacity="0.200" />
      <path d="M620 0 L650 40 H550 V0 Z" fill="#7cc4e6" opacity="0.140" />
      <path d="M700 40 Q780 10 850 0 H1035 L1065 40 Z" fill="#7cc0ea" opacity="0.140" />
      <path d="M1220 0 L1255 40 H1375 L1310 0 Z" fill="#5b9bdc" opacity="0.250" />
      <path d="M1310 -2 Q1349 18 1378 42" stroke="#a9d0f7" strokeWidth="11" fill="none" className="blur-[2px]" />
    </svg>
    <div className="absolute top-0 left-0 h-px w-full bg-white/45" />
    <div className="relative flex h-full items-center">
      <div className="ml-[8px] w-[37px] shrink-0"><StartOrb /></div>
      <div className="ml-[28px] w-[32px] shrink-0"><IeIcon /></div>
      <div className="ml-[30px] w-[32px] shrink-0"><ExplorerIcon /></div>
      <TaskButton className="ml-[16px] w-[60px] bg-linear-to-br from-white/55 to-white/10"><ChromeIcon /></TaskButton>
      <TaskButton className="ml-[2px] w-[55px] bg-linear-to-br from-white/55 to-white/10"><JiraIcon /></TaskButton>
      <div className="h-[38px] w-[5px] rounded-r-[3px] border border-l-0 border-[#163e5c] bg-white/30" />
      <TaskButton className="ml-[2px] w-[52px] bg-linear-to-br from-[#fdf3e4] to-[#e0a968]"><OutlookIcon /></TaskButton>
      <div className="h-[38px] w-[4px] rounded-r-[3px] border border-l-0 border-[#163e5c] bg-[#e6c08c]" />
      <div className="h-[38px] w-[4px] rounded-r-[3px] border border-l-0 border-[#163e5c] bg-[#b9a98c]" />
      <TaskButton className="ml-[2px] w-[60px] bg-linear-to-br from-white/55 to-white/10"><GridAppIcon /></TaskButton>
      <TaskButton className="ml-[2px] w-[60px] bg-linear-to-br from-white/55 to-white/10"><WordIcon /></TaskButton>
      <TaskButton className="ml-[2px] w-[60px] bg-linear-to-br from-white/55 to-white/10"><PictureManagerIcon /></TaskButton>

      <div className="ml-auto flex h-full items-center text-white">
        <svg width="8" height="5" viewBox="0 0 8 5" className="mr-[13px]">
          <path d="M4 0 L8 4.500 H0 Z" fill="#fff" />
        </svg>
        <svg width="16" height="16" viewBox="0 0 16 16" className="mr-[9px]">
          <circle cx="8" cy="8" r="7.300" fill="url(#green)" />
        </svg>
        <svg width="16" height="16" viewBox="0 0 16 16" className="mr-[8px]">
          <path d="M2 1 V15" stroke="#fff" strokeWidth="1.500" />
          <path d="M4 2 H9 V4 H15 L13 7 L11 9 H9 L8 8 H4 Z" fill="#fff" />
        </svg>
        <svg width="16" height="16" viewBox="0 0 16 16" className="mr-[8px]">
          <path d="M5.500 4 H15 V11.500 H5 V7 M10 12 V14 M6.500 14.500 H14" fill="none" stroke="#fff" strokeWidth="1.300" />
          <path d="M1.500 1 V4.500 H5 V1 M3.200 4.500 V12.500 H5" fill="none" stroke="#fff" strokeWidth="1.300" />
        </svg>
        <svg width="16" height="16" viewBox="0 0 16 16" className="mr-[17px]">
          <path d="M1 5.500 H3.500 L7 1.500 V14.500 L3.500 10.500 H1 Z" fill="#fff" />
          <path d="M9 5.500 Q10.500 8 9 10.500 M11 4 Q13.500 8 11 12 M13 2.500 Q16.500 8 13 13.500" fill="none" stroke="#fff" />
        </svg>
        <div className="flex w-[60px] flex-col items-center text-[12px] leading-[17px] tracking-[-0.6px] whitespace-nowrap">
          <span>17:00</span>
          <span>14/05/2015</span>
        </div>
        <div className="ml-[11px] h-[39px] w-[14px] border border-[#5f7f9f] bg-linear-to-b from-[#4f719b] to-[#1c3c66]" />
      </div>
    </div>
  </div>
);

const App: React.FC = () => {
  return (
    <div className="h-[1080px] w-[1920px] overflow-hidden bg-[#e8ecf1] font-['Open_Sans',sans-serif] text-[11px]">
      <Defs />
      <TitleBar />
      <Ribbon />
      <MessageHeader />
      <MessageBody />
      <PeoplePane />
      <Taskbar />
    </div>
  );
};

export default App;
